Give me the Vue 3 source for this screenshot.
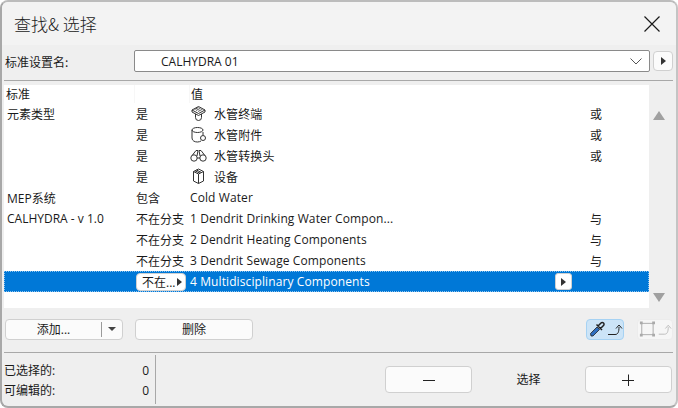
<template>
  <div class="win">
    <div class="title-bar">
      <span class="title">查找& 选择</span>
      <svg class="close" width="16" height="16" viewBox="0 0 16 16">
        <path d="M0.5 0.5 L15.5 15.5 M15.5 0.5 L0.5 15.5" stroke="#1a1a1a" stroke-width="1.2" fill="none" />
      </svg>
    </div>

    <div class="body">
      <!-- 标准设置名 -->
      <div class="name-row">
        <span class="name-label">标准设置名:</span>
        <div class="combo">
          <span>CALHYDRA 01</span>
          <svg width="12" height="7" viewBox="0 0 12 7">
            <path d="M0.5 0.5 L6 6 L11.5 0.5" stroke="#555" fill="none" />
          </svg>
        </div>
        <button class="arrow-btn"><i class="tri"></i></button>
      </div>
      <div class="rule"></div>

      <!-- 列表 -->
      <div class="list-wrap">
        <div class="list">
          <div class="head">
            <span class="h1">标准</span>
            <span class="h2"></span>
            <span class="h3">值</span>
          </div>
          <div v-for="(r, i) in rows" :key="i" class="row" :class="{ sel: r.sel }">
            <span class="c1">{{ r.name }}</span>
            <span class="c2">
              <span v-if="r.sel" class="op-btn">不在...<i class="tri"></i></span>
              <template v-else>{{ r.op }}</template>
            </span>
            <span class="c3">
              <svg v-if="r.icon" class="ico" width="17" height="17" viewBox="0 0 17 17" fill="none" stroke="#333" stroke-width="1">
                <template v-if="r.icon === 1">
                  <path d="M2 5 L8.500 1.500 L15 5 L8.500 8.500 Z" />
                  <path d="M4.500 4.500 L8.500 2.500 M6 5.500 L10.500 3.200 M8 6.500 L12.500 4.200" stroke-width="0.8" />
                  <path d="M2 5 V7 L8.500 10.500 L15 7 V5" />
                  <path d="M5.500 9 V12.500 A3 3 0 0 0 11.500 12.500 V9" />
                </template>
                <template v-else-if="r.icon === 2">
                  <ellipse cx="7.500" cy="4" rx="5.500" ry="2.500" />
                  <path d="M2 4 V12 C2 15 5 16 7.500 16 C9 16 10 15.500 11 15" />
                  <path d="M13 6 V9" />
                  <circle cx="13" cy="12" r="2.500" />
                </template>
                <template v-else-if="r.icon === 3">
                  <circle cx="4" cy="11" r="3.200" />
                  <circle cx="13" cy="11" r="3.200" />
                  <path d="M2.500 8 L6 3.500 H8 L7 9 M14.500 8 L11 3.500 H9 L10 9 M7 11 H10" />
                </template>
                <template v-else>
                  <path d="M3.500 3.500 L8.500 1 L13.500 3.500 V13 L8.500 15.500 L3.500 13 Z" />
                  <path d="M3.500 3.500 L8.500 6 L13.500 3.500 M8.500 6 V15.500 M5 2.800 L10 5.200 M6.500 2 L11.500 4.500" />
                </template>
              </svg>
              <span :class="{ indent: r.icon }">{{ r.value }}</span>
              <button v-if="r.sel" class="row-btn"><i class="tri"></i></button>
            </span>
            <span class="c4">{{ r.logic }}</span>
          </div>
        </div>
        <div class="scroll">
          <i class="up"></i>
          <i class="down"></i>
        </div>
      </div>

      <!-- 操作按钮 -->
      <div class="actions">
        <div class="add-btn">
          <span class="add-main">添加...</span>
          <span class="add-drop"><i class="tri-down"></i></span>
        </div>
        <button class="del-btn">删除</button>
        <div class="spacer"></div>
        <div class="tool active">
          <svg width="36" height="20" viewBox="0 0 36 20" fill="none">
            <path d="M4 17 L3.500 14.500 L10 8 L12.500 10.500 L6 17 Z" fill="#2f6fc0" stroke="#222" stroke-width="0.8" />
            <path d="M9.500 5.500 L15 11 M11 7 L14 4 A1.400 1.400 0 0 1 16.500 6.500 L13.500 9.500" stroke="#222" stroke-width="1.500" />
            <path d="M21 15.500 H28 C31 15.500 32 13 32 8" stroke="#222" />
            <path d="M29 9.500 L32 6 L35 9.500" stroke="#222" />
          </svg>
        </div>
        <div class="tool off">
          <svg width="36" height="20" viewBox="0 0 36 20" fill="none">
            <rect x="4" y="4" width="12" height="12" stroke="#aaa" />
            <path d="M2 2 h3 v3 h-3 z M15 2 h3 v3 h-3 z M2 15 h3 v3 h-3 z M15 15 h3 v3 h-3 z" fill="#aaa" />
            <path d="M22 15.500 H28 C31 15.500 32 13 32 8" stroke="#bbb" />
            <path d="M29 9.500 L32 6 L35 9.500" stroke="#bbb" />
          </svg>
        </div>
      </div>
      <div class="rule bottom-rule"></div>

      <!-- 底部 -->
      <div class="footer">
        <div class="stats">
          <div class="stat"><span>已选择的:</span><span>0</span></div>
          <div class="stat"><span>可编辑的:</span><span>0</span></div>
        </div>
        <div class="select-group">
          <button class="sel-btn">
            <svg width="12" height="12" viewBox="0 0 12 12"><path d="M0 6.500 H12" stroke="#222" /></svg>
          </button>
          <span class="sel-label">选择</span>
          <button class="sel-btn">
            <svg width="12" height="12" viewBox="0 0 12 12"><path d="M0 6.500 H12 M6.500 0.500 V12" stroke="#222" /></svg>
          </button>
        </div>
      </div>
    </div>
  </div>
</template>

<script setup>
const rows = [
  { name: '元素类型', op: '是', value: '水管终端', logic: '或', icon: 1 },
  { name: '', op: '是', value: '水管附件', logic: '或', icon: 2 },
  { name: '', op: '是', value: '水管转换头', logic: '或', icon: 3 },
  { name: '', op: '是', value: '设备', logic: '', icon: 4 },
  { name: 'MEP系统', op: '包含', value: 'Cold Water', logic: '' },
  { name: 'CALHYDRA - v 1.0', op: '不在分支', value: '1 Dendrit Drinking Water Compon...', logic: '与' },
  { name: '', op: '不在分支', value: '2 Dendrit Heating Components', logic: '与' },
  { name: '', op: '不在分支', value: '3 Dendrit Sewage Components', logic: '与' },
  { name: '', op: '', value: '4 Multidisciplinary Components', logic: '', sel: true },
]
</script>

<style>
html,
body {
  background: #fff;
}
</style>

<style scoped>
.win {
  width: 678px;
  height: 408px;
  box-sizing: border-box;
  border: 2px solid #a8a8a8;
  border-top-color: #bcbcbc;
  border-right-color: #c4c4c4;
  border-radius: 8px;
  background: #efefef;
  overflow: hidden;
  display: flex;
  flex-direction: column;
  font-family: "Open Sans", "Noto Sans CJK SC", sans-serif;
  font-size: 12px;
  color: #1a1a1a;
}

button {
  font: inherit;
  color: inherit;
  padding: 0;
}

.title-bar {
  height: 43px;
  flex: none;
  display: flex;
  align-items: center;
  justify-content: space-between;
  padding: 0 16px 0 12px;
  background: #f3f3f3;
}

.title {
  font-size: 17px;
  font-family: "Noto Sans CJK SC", sans-serif;
  font-weight: 300;
  color: #222;
}

.close {
  margin-top: 1px;
}

.body {
  flex: 1;
  display: flex;
  flex-direction: column;
  min-height: 0;
}

.name-row {
  height: 22px;
  margin-top: 5px;
  display: flex;
  align-items: center;
  flex: none;
}

.name-label {
  width: 132px;
  padding-left: 3px;
  box-sizing: border-box;
  font-family: "Noto Sans CJK SC", sans-serif;
}

.combo {
  width: 516px;
  height: 22px;
  box-sizing: border-box;
  border: 1px solid #8a8a8a;
  border-radius: 2px;
  background: #fff;
  display: flex;
  align-items: center;
  justify-content: space-between;
  padding: 0 7px 0 26px;
}

.arrow-btn {
  width: 20px;
  height: 20px;
  margin-left: 3px;
  box-sizing: border-box;
  border: 1px solid #d0d0d0;
  border-radius: 4px;
  background: #fbfbfb;
  display: flex;
  align-items: center;
  justify-content: center;
}

.tri {
  display: inline-block;
  width: 0;
  height: 0;
  border-left: 5px solid #333;
  border-top: 4px solid transparent;
  border-bottom: 4px solid transparent;
}

.rule {
  height: 1px;
  background: #a8a8a8;
  margin: 8px 3px 0 2px;
  flex: none;
}

.list-wrap {
  display: flex;
  height: 223px;
  margin: 4px 0 0 2px;
  flex: none;
}

.list {
  width: 645px;
  background: #fff;
  flex: none;
}

.head {
  height: 18px;
  display: flex;
  align-items: center;
  width: 643px;
  background: #f7f7f7;
  font-family: "Noto Sans CJK SC", sans-serif;
}

.h1 {
  width: 130px;
  margin-right: 1px;
  padding-left: 2px;
  box-sizing: border-box;
  background: #fff;
  line-height: 18px;
}

.h2 {
  width: 54px;
  margin-right: 1px;
  height: 18px;
  background: #fff;
}

.h3 {
  flex: 1;
  padding-left: 1px;
  background: #fff;
  line-height: 18px;
}

.row {
  height: 21px;
  display: flex;
  align-items: center;
  white-space: nowrap;
}

.row.sel {
  background: #0078d7;
  color: #fff;
  outline: 1px dotted #8fc4ee;
  outline-offset: -1px;
}

.c1 {
  width: 130px;
  padding-left: 3px;
  box-sizing: border-box;
}

.c2 {
  width: 55px;
  padding-left: 2px;
  box-sizing: border-box;
  display: flex;
  align-items: center;
}

.c3 {
  width: 400px;
  display: flex;
  align-items: center;
  padding-left: 1px;
  box-sizing: border-box;
  letter-spacing: 0.1px;
  position: relative;
  height: 100%;
}

.c4 {
  flex: 1;
  padding-left: 1px;
}

.ico {
  position: absolute;
  left: 1px;
  top: 2px;
}

.indent {
  margin-left: 24px;
}

.op-btn {
  width: 50px;
  height: 18px;
  box-sizing: border-box;
  background: #fff;
  border: 1px solid #d0d0d0;
  border-radius: 4px;
  color: #1a1a1a;
  display: flex;
  align-items: center;
  justify-content: space-between;
  padding: 0 3px 0 5px;
}

.row-btn {
  position: absolute;
  left: 366px;
  top: 2px;
  width: 17px;
  height: 17px;
  box-sizing: border-box;
  background: #fff;
  border: 1px solid #d0d0d0;
  border-radius: 3px;
  display: flex;
  align-items: center;
  justify-content: center;
}

.scroll {
  flex: 1;
  display: flex;
  flex-direction: column;
  justify-content: space-between;
  align-items: center;
  padding: 26px 8px 6px 0;
  box-sizing: border-box;
}

.up,
.down {
  width: 0;
  height: 0;
  border-left: 6px solid transparent;
  border-right: 6px solid transparent;
}

.up {
  border-bottom: 9px solid #a0a0a0;
}

.down {
  border-top: 9px solid #a0a0a0;
}

.actions {
  display: flex;
  align-items: center;
  height: 22px;
  margin-top: 10px;
  padding: 0 3px;
  flex: none;
}

.add-btn,
.del-btn,
.sel-btn {
  box-sizing: border-box;
  border: 1px solid #d0d0d0;
  border-radius: 4px;
  background: #fbfbfb;
}

.add-btn {
  width: 118px;
  height: 21px;
  display: flex;
  align-items: center;
}

.add-main {
  width: 95px;
  text-align: center;
  border-right: 1px solid #9a9a9a;
  line-height: 15px;
}

.add-drop {
  flex: 1;
  display: flex;
  justify-content: center;
}

.tri-down {
  width: 0;
  height: 0;
  border-left: 4px solid transparent;
  border-right: 4px solid transparent;
  border-top: 4px solid #444;
}

.del-btn {
  width: 118px;
  height: 21px;
  margin-left: 12px;
}

.spacer {
  flex: 1;
}

.tool {
  width: 38px;
  height: 21px;
  box-sizing: border-box;
  border-radius: 4px;
  display: flex;
  align-items: center;
  justify-content: center;
}

.tool.active {
  background: #cce4f7;
  border: 1px solid #a6d2f3;
}

.tool.off {
  width: 36px;
  margin-left: 13px;
  background: #f6f6f6;
  border: 1px solid #ececec;
}

.bottom-rule {
  margin-top: 12px;
}

.footer {
  flex: 1;
  display: flex;
  min-height: 0;
}

.stats {
  width: 154px;
  margin-top: 2px;
  margin-bottom: 2px;
  box-sizing: border-box;
  border-right: 1px solid #a8a8a8;
  padding: 5px 6px 0 2px;
  display: flex;
  flex-direction: column;
  gap: 0;
}

.stat {
  height: 20px;
  display: flex;
  align-items: center;
  justify-content: space-between;
}

.select-group {
  flex: 1;
  display: flex;
  align-items: flex-start;
  padding: 13px 4px 0 229px;
  justify-content: space-between;
}

.sel-btn {
  width: 87px;
  height: 27px;
  display: flex;
  align-items: center;
  justify-content: center;
}

.sel-label {
  line-height: 27px;
}
</style>
